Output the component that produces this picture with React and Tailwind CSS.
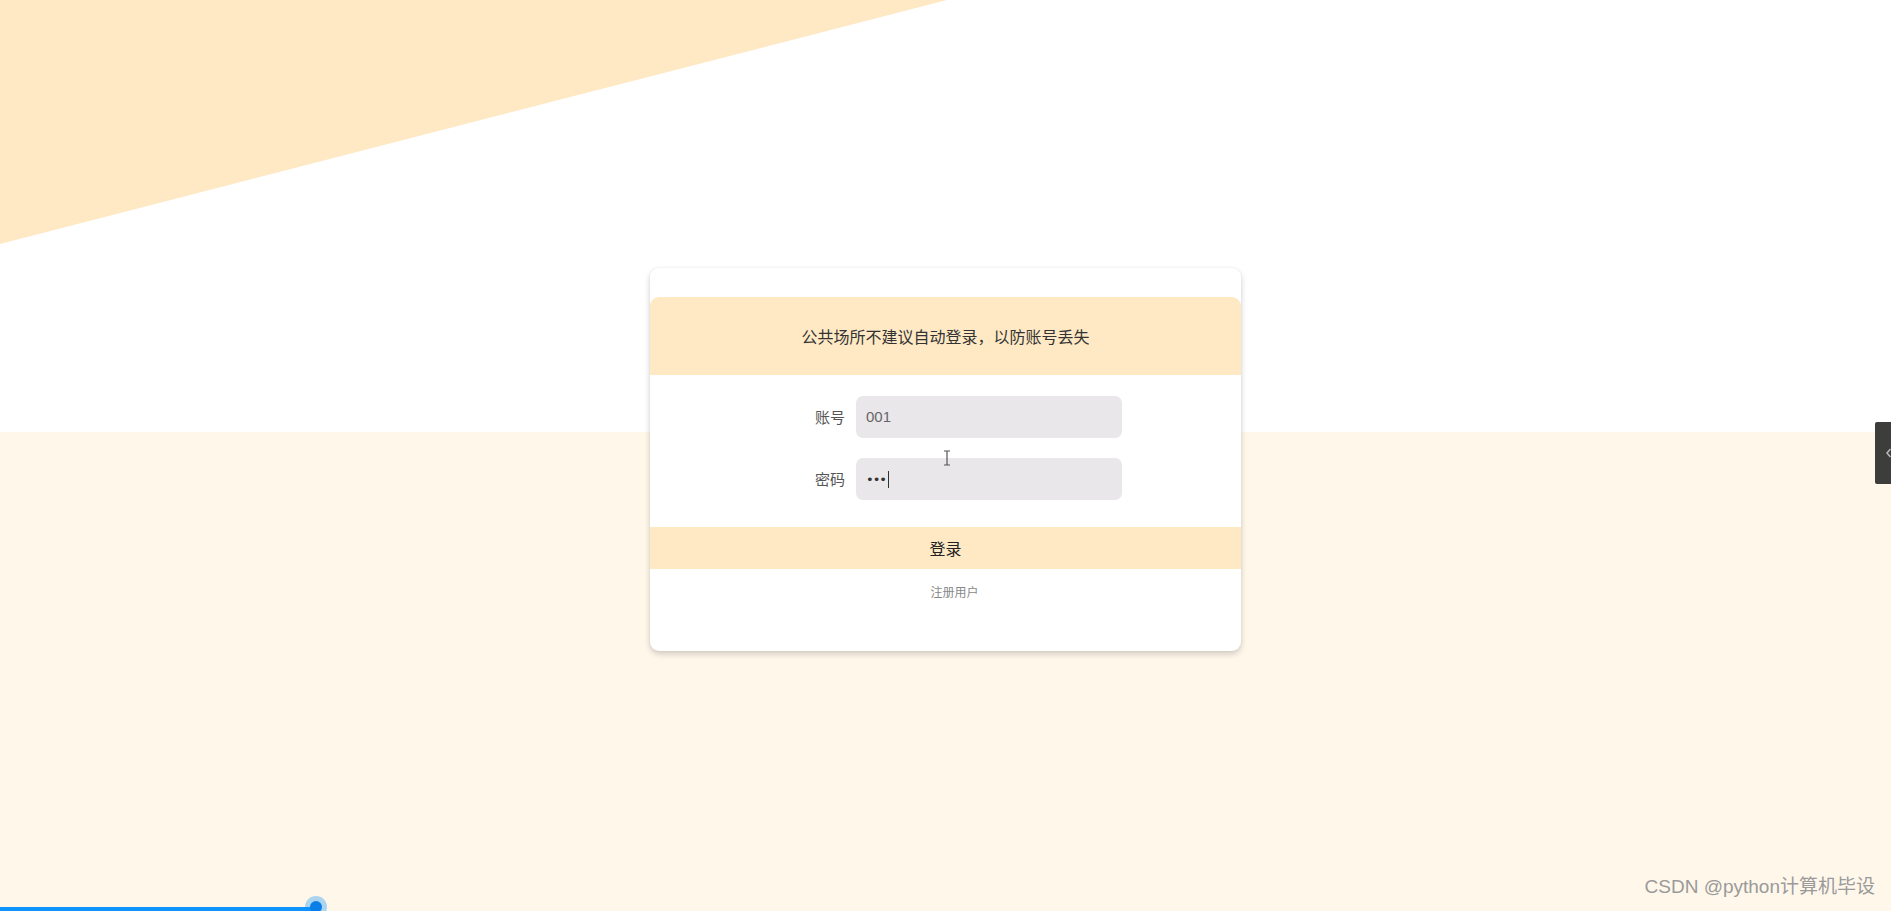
import React from "react";

export default function App() {
  const font = { fontFamily: '"Noto Sans CJK SC", "Liberation Sans", sans-serif' };
  return (
    <div className="relative w-full h-[911px] overflow-hidden grid" style={font}>
      {/* background layer */}
      <div className="[grid-area:1/1] flex flex-col">
        <div className="relative h-[432px] bg-white">
          <svg className="absolute left-0 top-0" width="948" height="245" viewBox="0 0 948 245">
            <polygon points="0,0 947,0 0,244" fill="#ffe9c5" />
          </svg>
        </div>
        <div className="flex-1 bg-[#fff7ea]" />
      </div>

      {/* card layer */}
      <div className="[grid-area:1/1] relative z-10 flex justify-center pt-[268px]">
        <div className="w-[591px] h-[383px] bg-white rounded-[9px] shadow-[0_3px_6px_rgba(0,0,0,0.18),0_0_3px_rgba(0,0,0,0.05)] pt-[29px] flex flex-col">
          <div className="h-[78px] bg-[#ffe9c5] rounded-t-[9px] flex items-center justify-center text-[16px] text-[#333]">
            公共场所不建议自动登录，以防账号丢失
          </div>
          <div className="flex flex-col items-center pt-[21px] gap-[20px]">
            <div className="flex items-center gap-[11px] ml-[46px]">
              <span className="text-[15px] text-[#555]">账号</span>
              <div className="w-[266px] h-[42px] bg-[#e9e7ea] rounded-[7px] flex items-center px-[10px] text-[15px] text-[#666]" style={{ fontFamily: '"Liberation Sans", sans-serif' }}>
                001
              </div>
            </div>
            <div className="flex items-center gap-[11px] ml-[46px]">
              <span className="text-[15px] text-[#555]">密码</span>
              <div className="relative w-[266px] h-[42px] bg-[#e9e7ea] rounded-[7px] flex items-center px-[10px] text-[#333]">
                <span className="text-[13px] tracking-[-1px] leading-none" style={{ fontFamily: '"DejaVu Sans", sans-serif' }}>•••</span>
                <span className="w-[1px] h-[17px] bg-[#333] ml-[2px]" />
                <svg className="absolute left-[87px] top-[-8px]" width="8" height="16" viewBox="0 0 8 16">
                  <path d="M1 1 H7 M4 1 V15 M1 15 H7" stroke="#555" strokeWidth="1.2" fill="none" />
                </svg>
              </div>
            </div>
          </div>
          <div className="mt-[27px] h-[42px] bg-[#ffe9c5] flex items-center justify-center text-[16px] text-[#222]">
            登录
          </div>
          <div className="flex justify-center pt-[14px] text-[12px] text-[#888] pl-[18px]">注册用户</div>
        </div>
      </div>

      {/* right edge tab */}
      <div className="absolute z-20 right-0 top-[422px] w-[16px] h-[62px] bg-[#3d3d3b] rounded-l-[2px] flex items-center justify-end">
        <svg width="5" height="10" viewBox="0 0 5 10">
          <path d="M4.5 1 L1 5 L4.5 9" stroke="#bbb" strokeWidth="1.5" fill="none" />
        </svg>
      </div>

      {/* watermark */}
      <div className="absolute z-20 right-[16px] bottom-[10px] text-[19px] text-[#9a9a9a]" style={{ fontFamily: '"Liberation Sans", "Noto Sans CJK SC", sans-serif' }}>
        CSDN @python计算机毕设
      </div>

      {/* progress bar */}
      <div className="absolute z-20 left-0 bottom-0 w-[316px] h-[4px] bg-[#0f93ff]" />
      <div className="absolute z-20 left-[305px] bottom-[-7px] w-[22px] h-[22px] rounded-full bg-[#0f93ff]/35 flex items-center justify-center">
        <div className="w-[12px] h-[12px] rounded-full bg-[#0a7fe8]" />
      </div>
    </div>
  );
}
